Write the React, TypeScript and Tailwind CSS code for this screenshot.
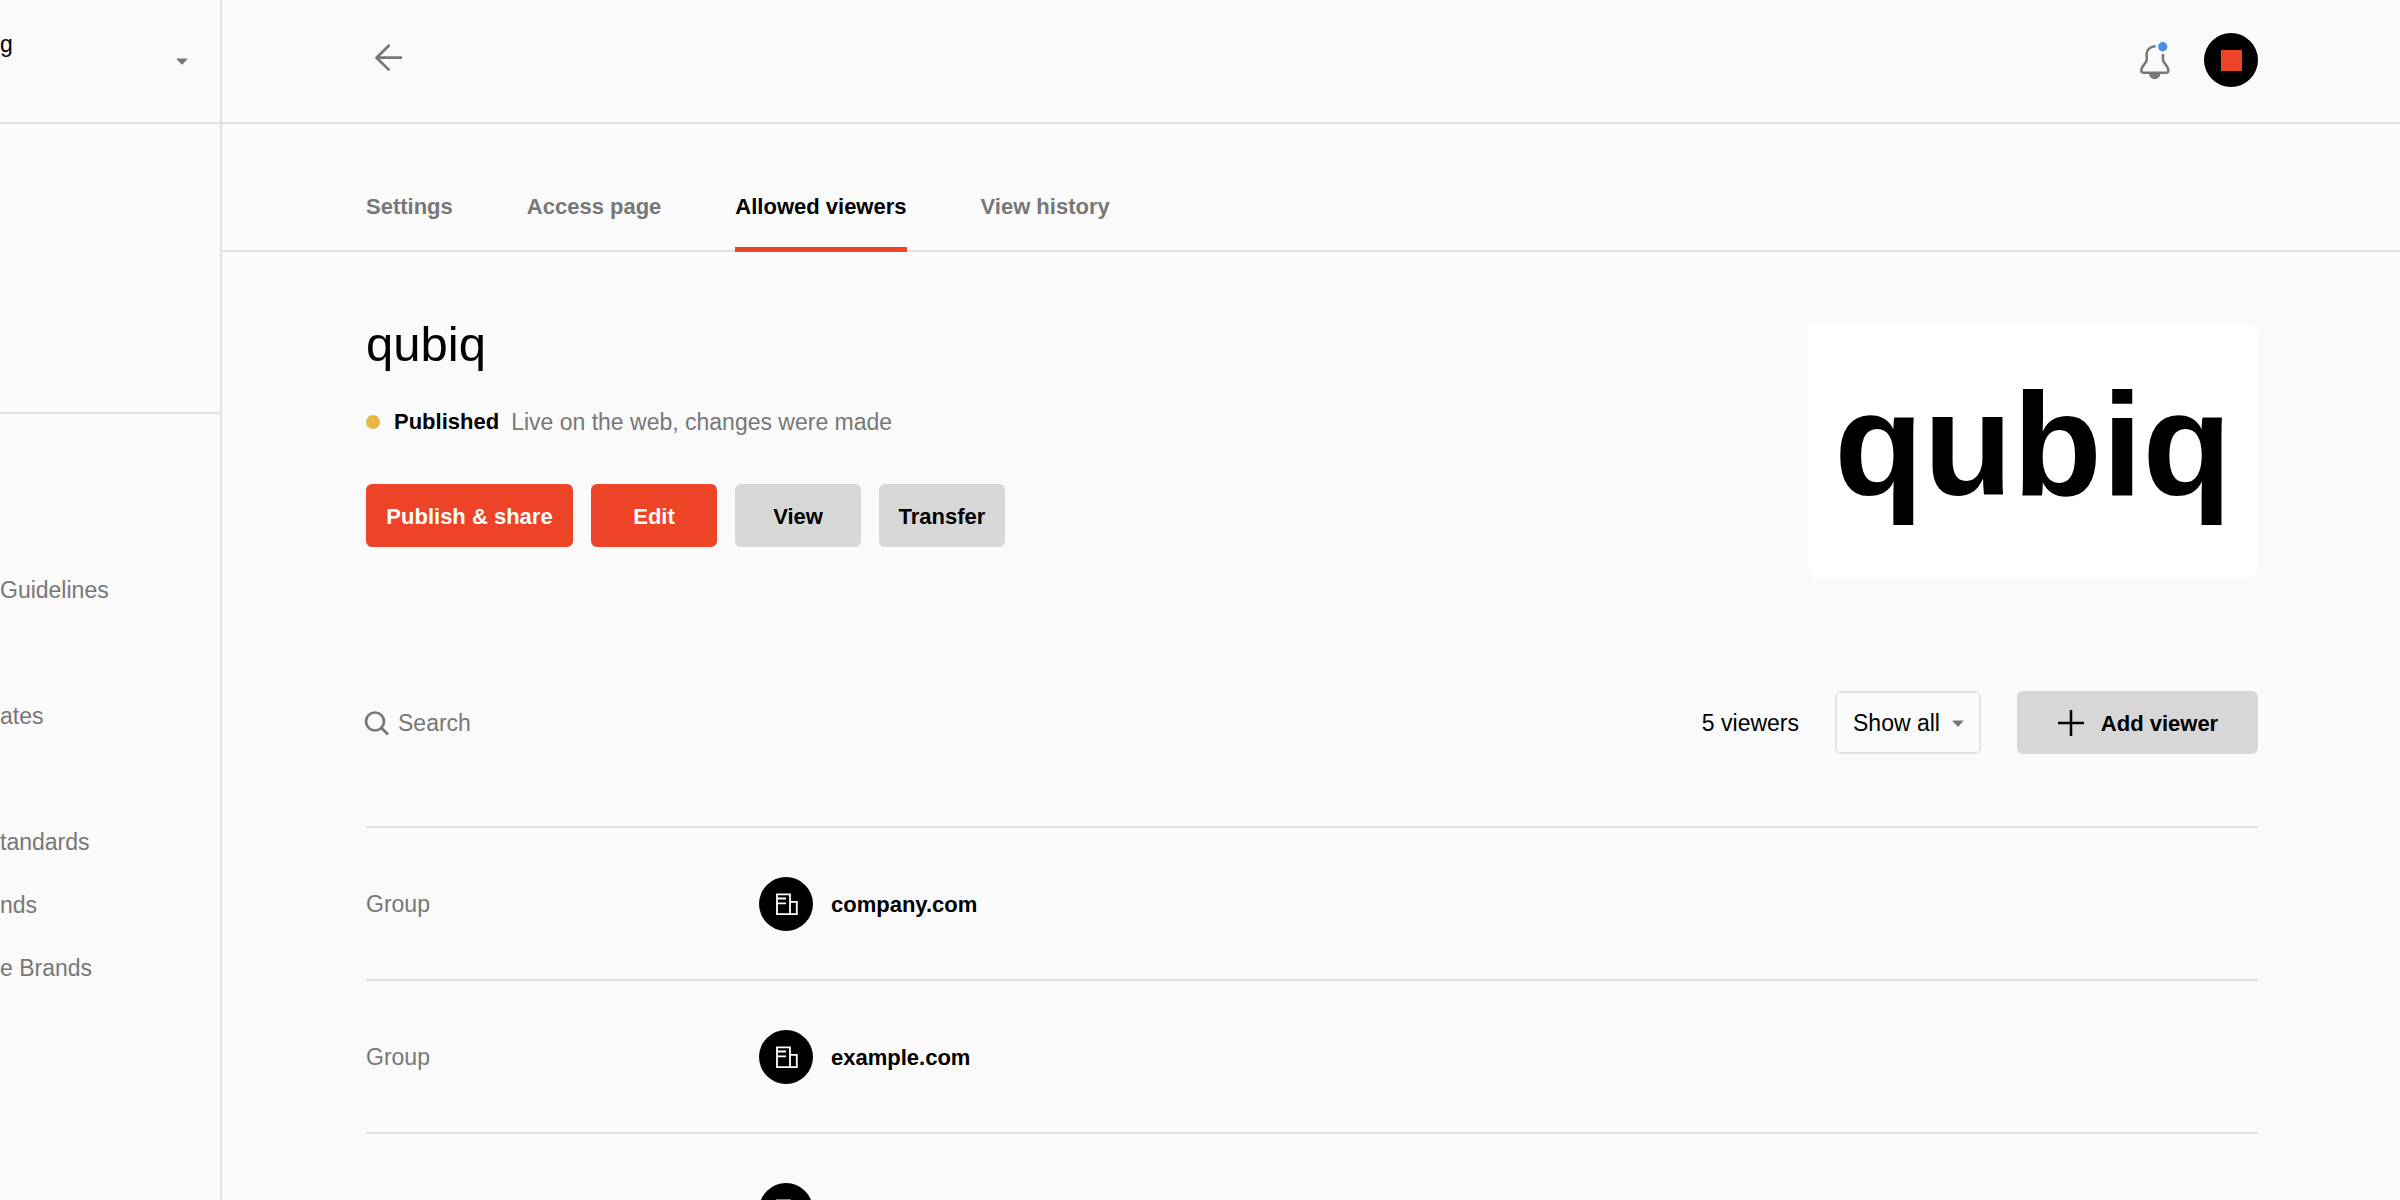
const tabs = [
  { label: "Settings", active: false },
  { label: "Access page", active: false },
  { label: "Allowed viewers", active: true },
  { label: "View history", active: false },
];

const sidebarGroups = [["Guidelines"], ["ates"], ["tandards", "nds", "e Brands"]];

const viewers = [
  { id: 1, type: "Group", name: "company.com" },
  { id: 2, type: "Group", name: "example.com" },
  { id: 3, type: "Group", name: "" },
];

const buttonBase =
  "flex h-[63px] min-w-[126px] items-center justify-center rounded-md px-4 pt-0.5 text-[22px] font-bold";

function Caret({ className = "" }: { className?: string }) {
  return (
    <svg viewBox="0 0 12 8" className={`h-2 w-3 fill-[#777] ${className}`} aria-hidden="true">
      <path d="M1 1.5h10a.5.5 0 0 1 .3.8L6.9 7a1.2 1.2 0 0 1-1.8 0L.7 2.300A.5.5 0 0 1 1 1.500Z" />
    </svg>
  );
}

function BackArrow() {
  return (
    <svg viewBox="0 0 54 54" className="h-[54px] w-[54px]" fill="none" stroke="#777" strokeWidth="2.700" aria-hidden="true">
      <path d="M36 24.700H10.500M23.500 12l-13 12.700 13 12.700" strokeLinejoin="round" />
    </svg>
  );
}

function Bell() {
  return (
    <svg viewBox="0 0 54 54" className="h-[54px] w-[54px]" fill="none" aria-hidden="true">
      <path
        d="M27.700 13.200c-5-.2-9 3.300-9 8.300v5c0 1-.4 1.900-1 2.700l-3 4.300c-.9 1.300-1.400 2.500-1.400 4 0 1.500.8 2.200 2.200 2.200h22.700c1.400 0 2.200-.7 2.200-2.200 0-1.500-.5-2.700-1.400-4l-3-4.300c-.6-.8-1-1.700-1-2.700v-5.500"
        stroke="#777"
        strokeWidth="2.500"
      />
      <path d="M21 40.500h11.400a5.700 5.700 0 0 1-11.400 0Z" fill="#777" />
      <circle cx="34.700" cy="13.700" r="4.700" fill="#4a90e2" />
    </svg>
  );
}

function Building() {
  return (
    <svg viewBox="0 0 54 54" className="h-[54px] w-[54px]" fill="none" stroke="#fff" strokeWidth="1.800" aria-hidden="true">
      <path d="M18 17.300h13v19.900H18zM31 24.800h6.800v12.400H31M18 21.500h9M18 26.300h9" />
    </svg>
  );
}

function Sidebar() {
  return (
    <aside className="w-[222px] shrink-0 overflow-hidden border-r-2 border-[#e2e2e2]">
      <div className="flex h-[124px] items-start justify-between border-b-2 border-[#e2e2e2] pr-8 pt-7">
        <span className="leading-8">g</span>
        <button type="button" aria-label="Switch workspace" className="flex h-[66px] items-center">
          <Caret />
        </button>
      </div>
      <div className="h-[290px] border-b-2 border-[#e2e2e2]" />
      <nav className="flex flex-col gap-[63px] pt-[145px] text-[#777]">
        {sidebarGroups.map((group) => (
          <ul key={group[0]}>
            {group.map((label) => (
              <li key={label}>
                <a href="#" className="flex h-[63px] items-center whitespace-nowrap">
                  {label}
                </a>
              </li>
            ))}
          </ul>
        ))}
      </nav>
    </aside>
  );
}

function Header() {
  return (
    <header className="flex h-[124px] items-start justify-between border-b-2 border-[#e2e2e2] pl-36 pr-[142px] pt-[33px]">
      <button type="button" aria-label="Back">
        <BackArrow />
      </button>
      <div className="flex gap-[22px]">
        <button type="button" aria-label="Notifications">
          <Bell />
        </button>
        <button
          type="button"
          aria-label="Account"
          className="flex h-[54px] w-[54px] items-center justify-center rounded-full bg-black"
        >
          <span className="h-[21px] w-[21px] bg-[#ed4427]" />
        </button>
      </div>
    </header>
  );
}

function Tabs() {
  return (
    <nav className="flex gap-[74px] border-b-2 border-[#e2e2e2] pl-36 pr-[142px] pt-[67px] text-[22px] font-bold leading-8">
      {tabs.map((tab) => (
        <a
          key={tab.label}
          href="#"
          aria-current={tab.active ? "page" : undefined}
          className={
            tab.active
              ? "-mb-0.5 border-b-[5px] border-[#ed4427] pb-6 text-black"
              : "-mb-0.5 border-b-[5px] border-transparent pb-6 text-[#777]"
          }
        >
          {tab.label}
        </a>
      ))}
    </nav>
  );
}

function Overview() {
  return (
    <section className="flex items-start justify-between">
      <div>
        <h1 className="text-[49px] leading-10">qubiq</h1>
        <div className="mt-[42px] flex items-center leading-8">
          <span className="mr-3.5 h-3.5 w-3.5 rounded-full bg-[#e8b644]" />
          <strong className="mr-3 text-[22px] font-bold">Published</strong>
          <span className="text-[#777]">Live on the web, changes were made</span>
        </div>
        <div className="mt-[46px] flex gap-[18px]">
          <button type="button" className={`${buttonBase} min-w-[207px] bg-[#ed4427] text-white`}>
            Publish &amp; share
          </button>
          <button type="button" className={`${buttonBase} bg-[#ed4427] text-white`}>
            Edit
          </button>
          <button type="button" className={`${buttonBase} bg-[#d7d7d7]`}>
            View
          </button>
          <button type="button" className={`${buttonBase} bg-[#d7d7d7]`}>
            Transfer
          </button>
        </div>
      </div>
      <div className="flex h-[254px] w-[450px] items-center justify-center rounded-lg bg-white pb-3 text-[146px] font-bold leading-none">
        qubiq
      </div>
    </section>
  );
}

function Toolbar() {
  return (
    <div className="mt-[113px] flex items-center justify-between">
      <div className="flex items-center gap-2">
        <svg
          viewBox="0 0 24 24"
          className="h-6 w-6 overflow-visible"
          fill="none"
          stroke="#777"
          strokeWidth="2.700"
          aria-hidden="true"
        >
          <circle cx="9" cy="10.500" r="9" />
          <path d="M15.500 17l6.500 6.500" />
        </svg>
        <label htmlFor="viewer-search" className="sr-only">
          Search viewers
        </label>
        <input
          id="viewer-search"
          type="text"
          placeholder="Search"
          className="h-[63px] w-80 bg-transparent pt-0.5 outline-none placeholder:text-[#777]"
        />
      </div>
      <div className="flex items-center gap-9">
        <span className="pt-0.5">5 viewers</span>
        <div className="relative">
          <select
            aria-label="Filter viewers"
            className="h-[63px] w-[146px] appearance-none rounded-md border-2 border-[#e2e2e2] bg-transparent pl-4 pt-0.5"
          >
            <option>Show all</option>
          </select>
          <Caret className="pointer-events-none absolute right-[17px] top-7" />
        </div>
        <button type="button" className={`${buttonBase} min-w-[241px] gap-4 bg-[#d7d7d7]`}>
          <svg viewBox="0 0 28 28" className="h-7 w-7" fill="none" stroke="#000" strokeWidth="2.500" aria-hidden="true">
            <path d="M14 0v26M1 13h26" />
          </svg>
          Add viewer
        </button>
      </div>
    </div>
  );
}

function ViewerTable() {
  return (
    <table className="mt-[72px] w-full border-separate border-spacing-0 border-t-2 border-[#e2e2e2] text-left">
      <tbody>
        {viewers.map((viewer) => (
          <tr key={viewer.id}>
            <td className="h-[153px] w-[393px] border-b-2 border-[#e2e2e2] pt-0.5 text-[#777]">{viewer.type}</td>
            <td className="h-[153px] border-b-2 border-[#e2e2e2]">
              <div className="flex items-center gap-[18px]">
                <span className="rounded-full bg-black">
                  <Building />
                </span>
                <span className="pt-0.5 text-[22px] font-bold">{viewer.name}</span>
              </div>
            </td>
          </tr>
        ))}
      </tbody>
    </table>
  );
}

export default function App() {
  return (
    <div className="flex h-screen overflow-hidden bg-[#fafafa] font-['Liberation_Sans',Arial,sans-serif] text-[23px] text-black">
      <Sidebar />
      <main className="min-w-0 flex-1">
        <Header />
        <Tabs />
        <div className="pl-36 pr-[142px] pt-[72px]">
          <Overview />
          <Toolbar />
          <ViewerTable />
        </div>
      </main>
    </div>
  );
}
